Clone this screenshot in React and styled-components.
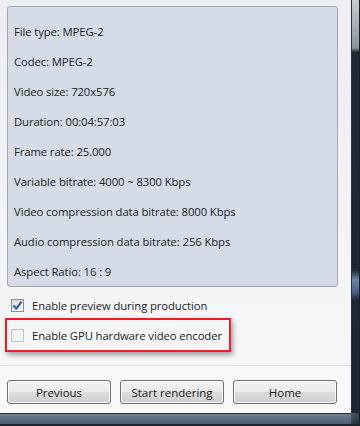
import React from 'react'
import styled, { createGlobalStyle } from 'styled-components'

const GlobalStyle = createGlobalStyle`
  html, body {
    margin: 0;
    padding: 0;
  }
  body {
    font-family: "Open Sans", "Noto Sans", sans-serif;
    font-size: 11.3px;
    letter-spacing: -0.1px;
    color: #1e1e1e;
  }
`

const infoLines = [
  'File type: MPEG-2',
  'Codec: MPEG-2',
  'Video size: 720x576',
  'Duration: 00:04:57:03',
  'Frame rate: 25.000',
  'Variable bitrate: 4000 ~ 8300 Kbps',
  'Video compression data bitrate: 8000 Kbps',
  'Audio compression data bitrate: 256 Kbps',
  'Aspect Ratio: 16 : 9',
]

function CheckBox({ checked }) {
  return (
    <BoxStyled $checked={checked}>
      {checked && (
        <svg width="11" height="11" viewBox="0 0 11 11">
          <path d="M1.5 5.5 L4.3 8.6 L9.6 1.6" fill="none" stroke="#2f63b8" strokeWidth="2.2" strokeLinejoin="round" />
        </svg>
      )}
    </BoxStyled>
  )
}

export default function App() {
  return (
    <>
      <GlobalStyle />
      <WindowStyled>
        <Content>
          <InfoPanel>
            {infoLines.map((line) => (
              <InfoLine key={line}>{line}</InfoLine>
            ))}
          </InfoPanel>

          <Options>
            <OptionRow>
              <CheckBox checked />
              <span>Enable preview during production</span>
            </OptionRow>
            <OptionRow $highlighted>
              <CheckBox />
              <span>Enable GPU hardware video encoder</span>
            </OptionRow>
          </Options>

          <Footer>
            <Button>Previous</Button>
            <Button>Start rendering</Button>
            <Button>Home</Button>
          </Footer>
        </Content>
        <RightFrame />
        <BottomFrame />
        <Corner />
      </WindowStyled>
    </>
  )
}

const WindowStyled = styled.div`
  width: 360px;
  height: 426px;
  display: grid;
  grid-template-columns: 351px 9px;
  grid-template-rows: 413px 13px;
  overflow: hidden;
`

const Content = styled.div`
  background: linear-gradient(#eceef2, #f4f5f7 70%, #f7f7f8);
  display: flex;
  flex-direction: column;
  padding: 6px 0 0 0;
`

const InfoPanel = styled.div`
  margin-left: 7px;
  width: 331px;
  height: 281px;
  box-sizing: border-box;
  background: #d5dce8;
  border: 1px solid #a3a7ad;
  border-radius: 3px;
  padding: 10px 0 0 6px;
`

const InfoLine = styled.div`
  height: 30px;
  line-height: 30px;
  white-space: nowrap;
`

const Options = styled.div`
  display: flex;
  flex-direction: column;
  padding: 9px 0 0 5px;
  gap: 4px;
`

const OptionRow = styled.label`
  display: flex;
  align-items: center;
  gap: 8px;
  width: 226px;
  box-sizing: border-box;
  height: ${(p) => (p.$highlighted ? '34px' : '18px')};
  padding-left: ${(p) => (p.$highlighted ? '4px' : '6px')};
  border: ${(p) => (p.$highlighted ? '2px solid #ee1c24' : 'none')};
  box-shadow: ${(p) => (p.$highlighted ? '2px 3px 5px rgba(0, 0, 0, 0.35)' : 'none')};
  white-space: nowrap;
`

const BoxStyled = styled.span`
  width: 13px;
  height: 13px;
  box-sizing: border-box;
  border: 1px solid ${(p) => (p.$checked ? '#8f8f8f' : '#c4c4c4')};
  background: ${(p) => (p.$checked ? 'linear-gradient(135deg, #dcdcdc, #fbfbfb)' : 'linear-gradient(135deg, #ececec, #fafafa)')};
  display: flex;
  align-items: center;
  justify-content: center;
  flex-shrink: 0;
`

const Footer = styled.div`
  margin-top: 13px;
  border-top: 1px solid #dfe1e4;
  background: #f8f8f9;
  flex: 1;
  display: flex;
  gap: 9px;
  padding: 14px 0 0 7px;
`

const Button = styled.button`
  width: 104px;
  height: 24px;
  font-family: "Open Sans", "Noto Sans", sans-serif;
  font-size: 11.5px;
  color: #1a1a1a;
  border: 1px solid #707070;
  border-radius: 3px;
  background: linear-gradient(#f2f2f2 0%, #ebebeb 50%, #dddddd 51%, #cfcfcf 100%);
  box-shadow: inset 0 0 0 1px rgba(255, 255, 255, 0.8);
  padding: 0;
`

const RightFrame = styled.div`
  border-left: 1px solid #2a313a;
  border-right: 1px solid #1a2028;
  background: linear-gradient(
    #c9cbce 0px,
    #8d949c 48px,
    #1f2a36 52px,
    #1c2631 270px,
    #6e87a6 280px,
    #4a6282 292px,
    #1d2833 300px,
    #1c2530 100%
  );
`

const BottomFrame = styled.div`
  border-top: 1px solid #2a313a;
  border-bottom: 2px solid #1e252d;
  background: linear-gradient(#6d7d92, #4e5d70);
`

const Corner = styled.div`
  background: linear-gradient(135deg, #4c5b6e, #232b35);
  border-bottom: 2px solid #1e252d;
  border-right: 1px solid #1a2028;
`
